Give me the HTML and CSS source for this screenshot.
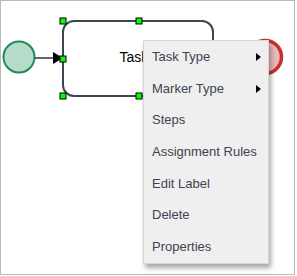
FILE: index.html
```html
<!DOCTYPE html>
<html lang="en">

<head>
    <meta charset="UTF-8">
    <title>Diagram</title>

    <link rel="stylesheet" href="styles.css">
</head>

<body>
    <div class="canvas">
        <svg class="diagram" width="297" height="276" viewBox="0 0 297 276">
            <!-- end event, partly under the menu -->
            <circle cx="265" cy="57" r="16.5" fill="#e9b9b9" stroke="#c8302c" stroke-width="3.5" />

            <!-- start event -->
            <circle cx="19" cy="57" r="15.5" fill="#b5dcc8" stroke="#1f8a5b" stroke-width="2" />

            <!-- flow -->
            <line x1="35" y1="58" x2="54" y2="58" stroke="#000" stroke-width="1.2" />
            <polygon points="53,52 63,58 53,64" fill="#000" />

            <!-- task -->
            <rect x="63" y="21" width="150" height="75" rx="11" ry="11" fill="#fff" stroke="#3c4650" stroke-width="2" />
            <text x="119.5" y="62" class="task-label">Task</text>

            <!-- selection handles -->
            <rect class="handle" x="60" y="18" width="6" height="6" />
            <rect class="handle" x="136" y="18" width="6" height="6" />
            <rect class="handle" x="60" y="56" width="6" height="6" />
            <rect class="handle" x="60" y="93" width="6" height="6" />
            <rect class="handle" x="136" y="93" width="6" height="6" />
        </svg>

        <ul class="menu">
            <li class="menu-item has-sub">Task Type</li>
            <li class="menu-item has-sub">Marker Type</li>
            <li class="menu-item">Steps</li>
            <li class="menu-item">Assignment Rules</li>
            <li class="menu-item">Edit Label</li>
            <li class="menu-item">Delete</li>
            <li class="menu-item">Properties</li>
        </ul>
    </div>
</body>

</html>
```

FILE: styles.css
```css
html {
    background-color: #fff;
    font-family: "Liberation Sans", Arial, Helvetica, sans-serif;
}

body {
    margin: 0;
}

.canvas {
    position: relative;
    width: 293px;
    height: 273px;
    border: 1px solid #b9b9b9;
    background-color: #fff;
    overflow: hidden;
}

.diagram {
    position: absolute;
    left: -1px;
    top: -1px;
}

.task-label {
    font-family: "Liberation Sans", Arial, sans-serif;
    font-size: 14px;
    fill: #000;
}

.handle {
    fill: #00ff00;
    stroke: #000;
    stroke-width: 1;
}

.menu {
    position: absolute;
    left: 142px;
    top: 39px;
    width: 124px;
    margin: 0;
    padding: 0;
    list-style: none;
    background-color: #efefef;
    border: 1px solid #d6d6de;
    box-shadow: 2px 4px 5px rgba(0, 0, 0, 0.35);
}

.menu-item {
    position: relative;
    height: 31.7px;
    line-height: 31.7px;
    padding-left: 8px;
    font-size: 13px;
    color: #3d4350;
    white-space: nowrap;
}

.menu-item.has-sub::after {
    content: "";
    position: absolute;
    right: 7px;
    top: 12px;
    border-top: 4px solid transparent;
    border-bottom: 4px solid transparent;
    border-left: 5px solid #000;
}
```
